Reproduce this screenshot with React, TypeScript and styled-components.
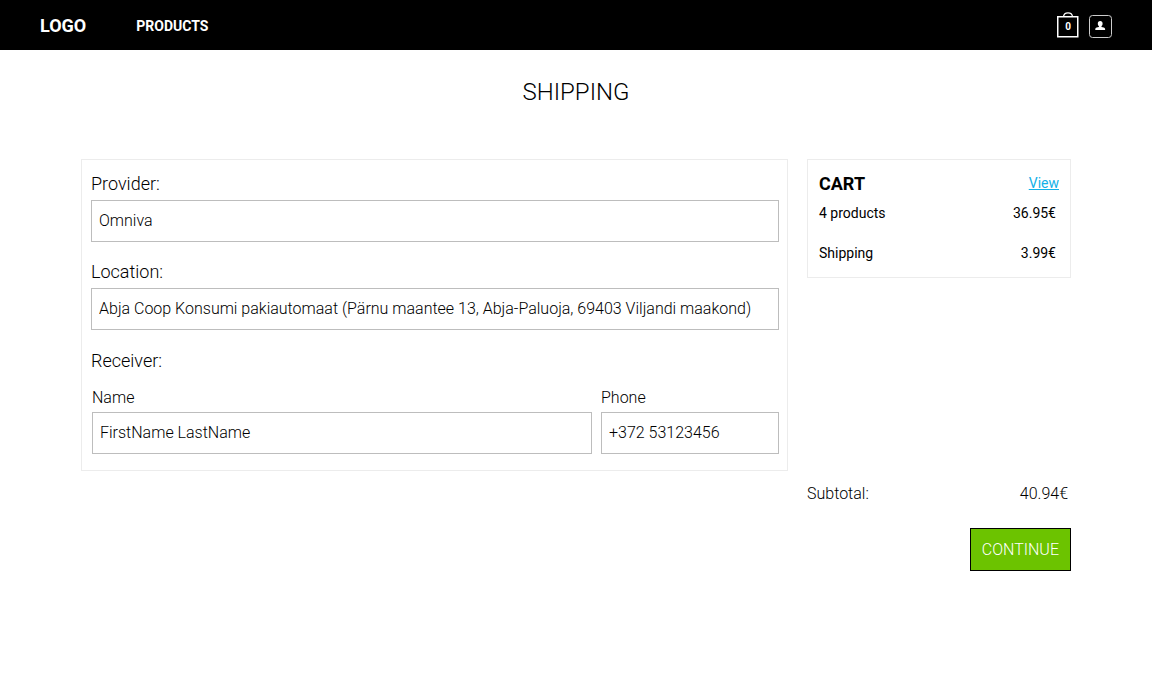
import React from "react";
import styled, { createGlobalStyle } from "styled-components";

const GlobalStyle = createGlobalStyle`
  *, *::before, *::after { box-sizing: border-box; }
  body {
    margin: 0;
    background: #fff;
    color: #000;
    font-family: Roboto, "Liberation Sans", sans-serif;
    font-weight: 300;
    font-size: 16px;
    line-height: 20px;
  }
`;

const Header = styled.header`
  display: flex;
  align-items: center;
  height: 50px;
  padding: 2px 40px 0;
  background: #000;
  color: #fff;
`;

const Logo = styled.a`
  margin-right: 50px;
  color: inherit;
  font-size: 18px;
  font-weight: 700;
  text-decoration: none;
`;

const NavLink = styled.a`
  color: inherit;
  font-size: 14px;
  font-weight: 700;
  text-decoration: none;
`;

const Actions = styled.div`
  display: flex;
  align-items: flex-end;
  gap: 10px;
  margin-left: auto;
  padding-bottom: 2px;
`;

const IconButton = styled.button`
  display: block;
  padding: 0;
  border: 0;
  background: none;
  color: inherit;
  cursor: pointer;

  svg { display: block; }
`;

const BagButton = styled(IconButton)`
  display: grid;
  place-items: center;
  font: 700 10px/12px Roboto, "Liberation Sans", sans-serif;

  > * { grid-area: 1 / 1; }
`;

const BagCount = styled.span`
  padding-top: 4px;
`;

const Title = styled.h1`
  margin: 0;
  padding: 26px 0 51px;
  font-size: 24px;
  font-weight: 300;
  line-height: 32px;
  text-align: center;
`;

const Layout = styled.main`
  display: grid;
  grid-template-columns: minmax(0, 1fr) 264px;
  column-gap: 19px;
  align-items: start;
  padding: 0 81px 40px;
`;

const Panel = styled.section`
  border: 1px solid #ececec;
`;

const FormPanel = styled(Panel)`
  padding: 12px 8px 16px 9px;
`;

const Field = styled.div`
  display: flex;
  flex-direction: column;
  gap: 4px;
  margin-bottom: 18px;
`;

const Label = styled.label`
  font-size: 18px;
  line-height: 24px;
`;

const SmallLabel = styled.label`
  line-height: 20px;
`;

const Group = styled.fieldset`
  margin: 0;
  padding: 0;
  border: 0;
`;

const Legend = styled.legend`
  padding: 1px 0 15px;
  font-size: 18px;
  line-height: 24px;
`;

const Row = styled.div`
  display: grid;
  grid-template-columns: minmax(0, 1fr) 178px;
  gap: 9px;
  padding-left: 1px;

  ${Field} { margin-bottom: 0; }
`;

const Input = styled.input`
  width: 100%;
  height: 42px;
  padding: 0 7px 2px;
  border: 1px solid #bdbdbd;
  border-radius: 0;
  background: #fff;
  color: inherit;
  font: inherit;
`;

const CartPanel = styled(Panel)`
  padding: 12px 11px 14px;
  font-size: 14px;
  font-weight: 400;
`;

const CartHead = styled.div`
  display: flex;
  justify-content: space-between;
  height: 24px;
  margin-bottom: 7px;
`;

const CartTitle = styled.h2`
  margin: 0;
  font-size: 18px;
  font-weight: 700;
  line-height: 24px;
`;

const ViewLink = styled.a`
  color: #12b0e8;
  line-height: 22px;
  text-decoration: underline;
`;

const Line = styled.div`
  display: flex;
  justify-content: space-between;
  padding-right: 3px;

  & + & { margin-top: 20px; }
`;

const Summary = styled.div`
  grid-column: 2;
  display: flex;
  flex-direction: column;
  gap: 24px;
  padding-top: 13px;
`;

const Continue = styled.button`
  align-self: flex-end;
  height: 43px;
  padding: 0 11px;
  border: 1px solid #000;
  background: #6cc300;
  color: #fff;
  font: inherit;
  cursor: pointer;
`;

function BagIcon() {
  return (
    <svg width="22" height="26" viewBox="0 0 22 26" fill="none" stroke="#fff" aria-hidden="true">
      <path d="M.75 4.75H20.75V24.75H.75Z" strokeWidth="1.5" />
      <path d="M6.5 4.5C6.8 2.2 8.4 .8 11 .8S15.2 2.2 15.5 4.5" strokeWidth="1.3" />
    </svg>
  );
}

function UserIcon() {
  return (
    <svg width="23" height="23" viewBox="0 0 23 23" aria-hidden="true">
      <rect x=".5" y=".5" width="22" height="22" rx="3" fill="none" stroke="#ccc" />
      <path
        d="M11.2 6C9.6 6 8.8 7 8.8 8.4C8.8 9.7 9.3 10.6 9.9 11.1V12C8.6 12.5 6.4 12.4 6.3 14V15H16.1V14C16 12.4 13.8 12.5 12.5 12V11.1C13.1 10.6 13.6 9.7 13.6 8.4C13.6 7 12.8 6 11.2 6Z"
        fill="#fff"
      />
    </svg>
  );
}

export default function App() {
  return (
    <>
      <GlobalStyle />
      <Header>
        <Logo href="#">LOGO</Logo>
        <nav>
          <NavLink href="#products">PRODUCTS</NavLink>
        </nav>
        <Actions>
          <BagButton type="button" aria-label="Cart, 0 items">
            <BagIcon />
            <BagCount>0</BagCount>
          </BagButton>
          <IconButton type="button" aria-label="Account">
            <UserIcon />
          </IconButton>
        </Actions>
      </Header>
      <Title>SHIPPING</Title>
      <Layout>
        <FormPanel>
          <Field>
            <Label htmlFor="provider">Provider:</Label>
            <Input id="provider" defaultValue="Omniva" />
          </Field>
          <Field>
            <Label htmlFor="location">Location:</Label>
            <Input
              id="location"
              defaultValue="Abja Coop Konsumi pakiautomaat (Pärnu maantee 13, Abja-Paluoja, 69403 Viljandi maakond)"
            />
          </Field>
          <Group>
            <Legend>Receiver:</Legend>
            <Row>
              <Field>
                <SmallLabel htmlFor="name">Name</SmallLabel>
                <Input id="name" defaultValue="FirstName LastName" />
              </Field>
              <Field>
                <SmallLabel htmlFor="phone">Phone</SmallLabel>
                <Input id="phone" type="tel" defaultValue="+372 53123456" />
              </Field>
            </Row>
          </Group>
        </FormPanel>
        <CartPanel>
          <CartHead>
            <CartTitle>CART</CartTitle>
            <ViewLink href="#cart">View</ViewLink>
          </CartHead>
          <Line>
            <span>4 products</span>
            <span>36.95€</span>
          </Line>
          <Line>
            <span>Shipping</span>
            <span>3.99€</span>
          </Line>
        </CartPanel>
        <Summary>
          <Line>
            <span>Subtotal:</span>
            <span>40.94€</span>
          </Line>
          <Continue type="button">CONTINUE</Continue>
        </Summary>
      </Layout>
    </>
  );
}
